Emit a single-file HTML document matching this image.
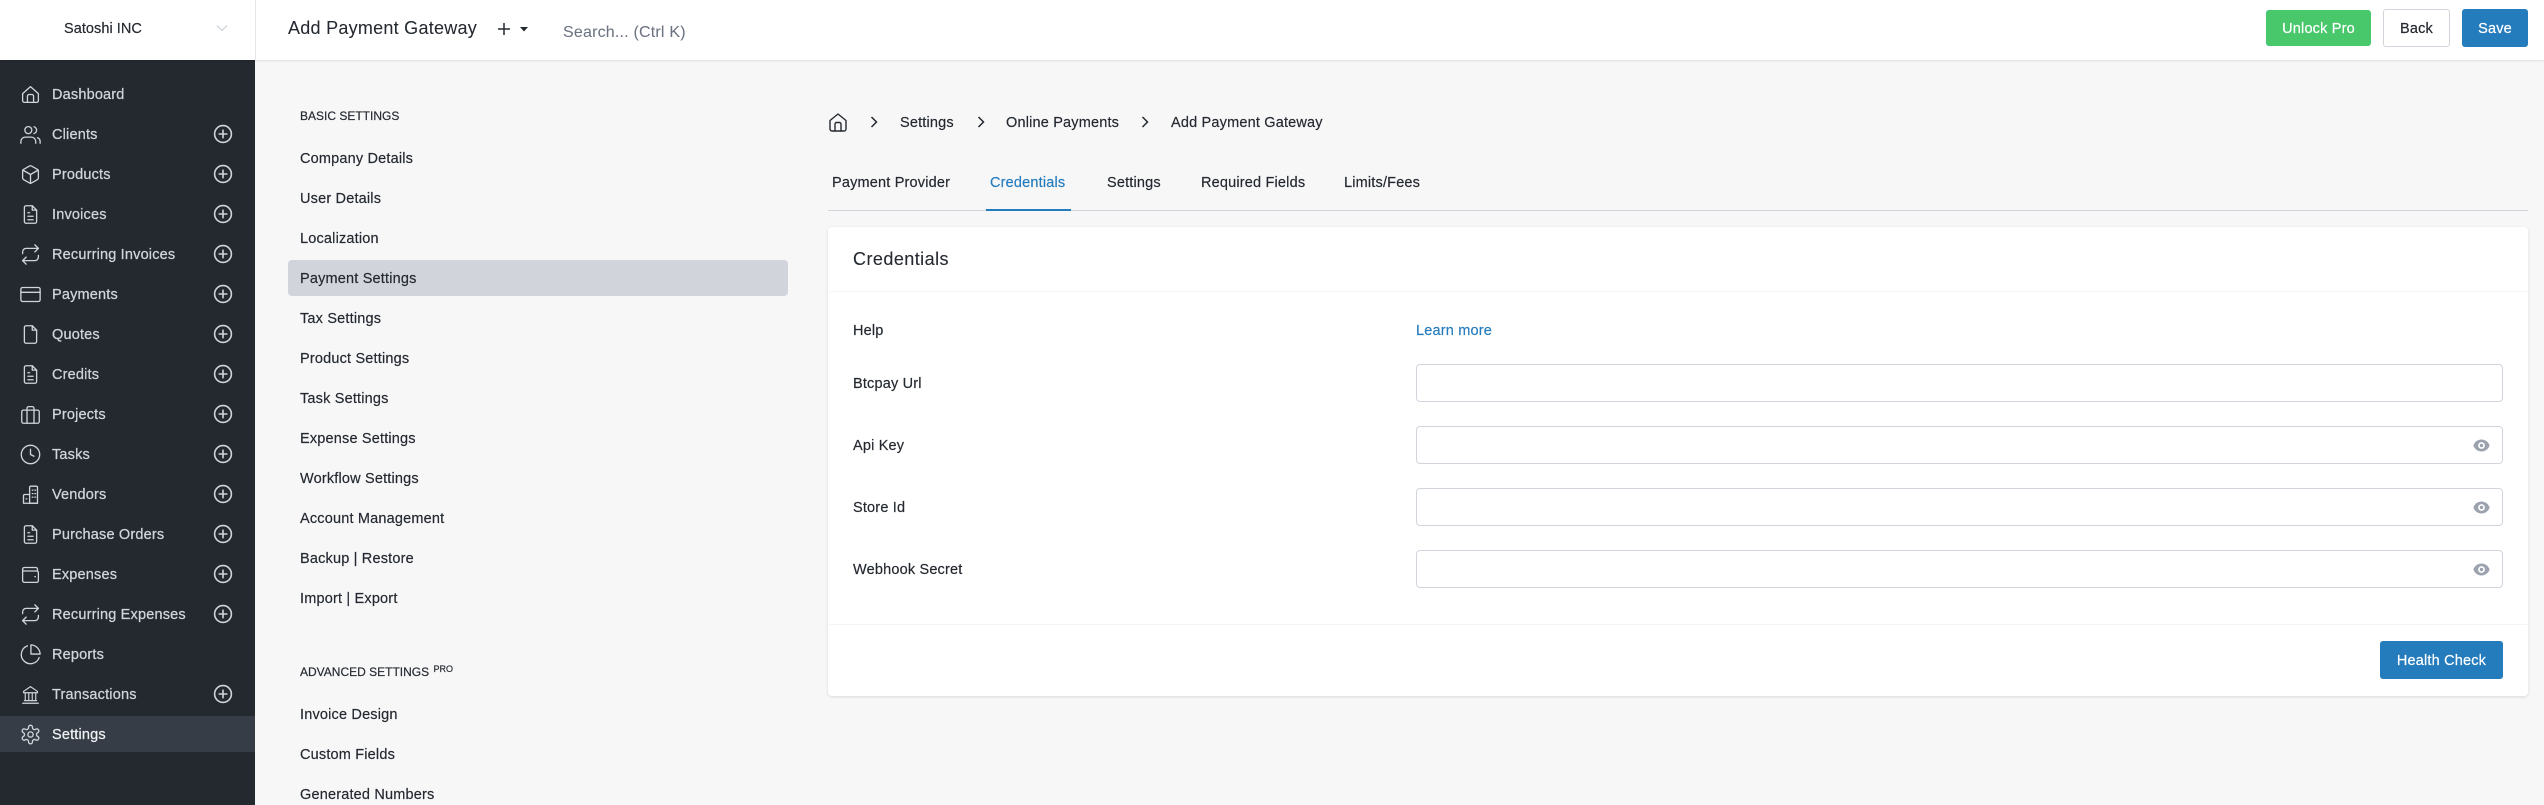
<!DOCTYPE html>
<html lang="en"><head><meta charset="utf-8"><title>Add Payment Gateway</title>
<style>
*{box-sizing:border-box}
html,body{margin:0;padding:0}
body{width:2544px;height:805px;overflow:hidden;position:relative;background:#f7f7f8;font-family:"Liberation Sans",sans-serif;font-size:14.5px;color:#242930;letter-spacing:.18px}
.t{position:absolute;white-space:nowrap;line-height:20px;height:20px;margin-top:1px;-webkit-text-stroke:.18px currentColor}
.m{-webkit-text-stroke:.25px currentColor}
.n{margin-top:0}
#top{position:absolute;left:0;top:0;width:2544px;height:60px;background:#fff;box-shadow:0 1px 2px rgba(0,0,0,.1)}
#co{position:absolute;left:0;top:0;width:256px;height:60px;border-right:1px solid #e5e7eb}
#side{position:absolute;left:0;top:60px;width:255px;height:745px;background:#242930}
#side .t{left:52px;color:#d1d5db}
.active{position:absolute;left:0;top:656px;width:255px;height:36px;background:#363d47}
svg{position:absolute;overflow:visible}
svg.i{left:19.5px;width:21px;height:21px;fill:none;stroke:#d1d5db;stroke-width:1.5;stroke-linecap:round;stroke-linejoin:round}
svg.p{left:213px;width:20px;height:20px;fill:none;stroke:#d1d5db;stroke-width:1.6;stroke-linecap:round}
.btn{position:absolute;border-radius:3px;color:#fff;text-align:center;padding-top:1px;-webkit-text-stroke:.2px currentColor}
.hl{position:absolute;left:288px;top:260px;width:500px;height:36px;background:#d1d5db;border-radius:4px}
.s .t{left:300px}
.card{position:absolute;left:828px;top:227px;width:1700px;height:469px;background:#fff;border-radius:4px;box-shadow:0 1px 3px rgba(0,0,0,.12)}
.hr{position:absolute;left:829px;width:1698px;height:1px;background:#f3f4f6}
.inp{position:absolute;left:1416px;width:1087px;height:38px;background:#fff;border:1px solid #d1d5db;border-radius:4px}
svg.e{left:2473px;width:17px;height:17px;fill:#9ca3af}
</style></head><body>

<div id="side">
<div class="active"></div>
<div class="t m" style="top:24px">Dashboard</div>
<div class="t m" style="top:64px">Clients</div>
<div class="t m" style="top:104px">Products</div>
<div class="t m" style="top:144px">Invoices</div>
<div class="t m" style="top:184px">Recurring Invoices</div>
<div class="t m" style="top:224px">Payments</div>
<div class="t m" style="top:264px">Quotes</div>
<div class="t m" style="top:304px">Credits</div>
<div class="t m" style="top:344px">Projects</div>
<div class="t m" style="top:384px">Tasks</div>
<div class="t m" style="top:424px">Vendors</div>
<div class="t m" style="top:464px">Purchase Orders</div>
<div class="t m" style="top:504px">Expenses</div>
<div class="t m" style="top:544px">Recurring Expenses</div>
<div class="t m" style="top:584px">Reports</div>
<div class="t m" style="top:624px">Transactions</div>
<div class="t m" style="top:664px;color:#eef0f2">Settings</div>

<svg class="i" style="top:23.5px" viewBox="0 0 24 24"><path d="M3 11 12 3l9 8v8a2 2 0 0 1-2 2H5a2 2 0 0 1-2-2Z"/><path d="M8.5 21v-7a2 2 0 0 1 2-2h3a2 2 0 0 1 2 2v7"/></svg>
<svg class="i" style="top:63.5px" viewBox="0 0 24 24"><circle cx="9.5" cy="7" r="4"/><path d="M1 22v-2a5 5 0 0 1 5-5h7a5 5 0 0 1 5 5v2"/><path d="M23 22v-2a4.5 4.5 0 0 0-3-4.3"/><path d="M16 3.2a4 4 0 0 1 0 7.7"/></svg>
<svg class="i" style="top:103.5px" viewBox="0 0 24 24"><path d="M21 8a2 2 0 0 0-1-1.73l-7-4a2 2 0 0 0-2 0l-7 4A2 2 0 0 0 3 8v8a2 2 0 0 0 1 1.73l7 4a2 2 0 0 0 2 0l7-4A2 2 0 0 0 21 16Z"/><path d="m3.3 7 8.7 5 8.7-5"/><path d="M12 22V12"/></svg>
<svg class="i" style="top:143.5px" viewBox="0 0 24 24"><path d="M14 2H7a2 2 0 0 0-2 2v16a2 2 0 0 0 2 2h10a2 2 0 0 0 2-2V7Z"/><path d="M14 2v5h5"/><path d="M9 10h2M9 14h6M9 18h6"/></svg>
<svg class="i" style="top:183.5px" viewBox="0 0 24 24"><path d="m17 1 4 4-4 4"/><path d="M3 11v-2a4 4 0 0 1 4-4h14"/><path d="m7 23-4-4 4-4"/><path d="M21 13v2a4 4 0 0 1-4 4H3"/></svg>
<svg class="i" style="top:223.5px" viewBox="0 0 24 24"><rect x="1" y="4" width="22" height="16" rx="2"/><path d="M1 9.5h22"/></svg>
<svg class="i" style="top:263.5px" viewBox="0 0 24 24"><path d="M14 2H7a2 2 0 0 0-2 2v16a2 2 0 0 0 2 2h10a2 2 0 0 0 2-2V7Z"/><path d="M14 2v5h5"/></svg>
<svg class="i" style="top:303.5px" viewBox="0 0 24 24"><path d="M14 2H7a2 2 0 0 0-2 2v16a2 2 0 0 0 2 2h10a2 2 0 0 0 2-2V7Z"/><path d="M14 2v5h5"/><path d="M9 10h2M9 14h6M9 18h6"/></svg>
<svg class="i" style="top:343.5px" viewBox="0 0 24 24"><rect x="2" y="7" width="20" height="15" rx="2"/><path d="M16 22V5a2 2 0 0 0-2-2h-4a2 2 0 0 0-2 2v17"/></svg>
<svg class="i" style="top:383.5px" viewBox="0 0 24 24"><circle cx="12" cy="12" r="10.5"/><path d="M12 6v6l4 2"/></svg>
<svg class="i" style="top:423.5px" viewBox="0 0 24 24"><path d="M11 22V4a1.5 1.5 0 0 1 1.5-1.5h6A1.5 1.5 0 0 1 20 4v18Z"/><path d="M11 12H5.500A1.500 1.500 0 0 0 4 13.500V22h16"/><path d="M14 7h.8M17 7h.8M14 11h.8M17 11h.8M14 15h.8M17 15h.8M7 17h.8"/></svg>
<svg class="i" style="top:463.5px" viewBox="0 0 24 24"><path d="M14 2H7a2 2 0 0 0-2 2v16a2 2 0 0 0 2 2h10a2 2 0 0 0 2-2V7Z"/><path d="M14 2v5h5"/><path d="M9 10h2M9 14h6M9 18h6"/></svg>
<svg class="i" style="top:503.5px" viewBox="0 0 24 24"><path d="M20 8V6a2 2 0 0 0-2-2H5a2 2 0 0 0-2 2v13a2 2 0 0 0 2 2h14a2 2 0 0 0 2-2v-9a2 2 0 0 0-2-2H3"/><path d="M17 14.500h.5"/></svg>
<svg class="i" style="top:543.5px" viewBox="0 0 24 24"><path d="m17 1 4 4-4 4"/><path d="M3 11v-2a4 4 0 0 1 4-4h14"/><path d="m7 23-4-4 4-4"/><path d="M21 13v2a4 4 0 0 1-4 4H3"/></svg>
<svg class="i" style="top:583.5px" viewBox="0 0 24 24"><path d="M21.900 15.500A10.500 10.500 0 1 1 8.500 2.100"/><path d="M23 11.500A11 11 0 0 0 12.500 1v10.500Z"/></svg>
<svg class="i" style="top:623.5px;stroke-width:1.3" viewBox="0 0 24 24"><path d="M3 22h18M5 19h14M6 19v-9M10 19v-9M14 19v-9M18 19v-9M4 10h16M4 10v-1.500L12 3l8 5.500V10"/></svg>
<svg class="i" style="top:663.5px" viewBox="0 0 24 24"><path d="M12.220 1.500h-.440a2 2 0 0 0-2 2v.680a2 2 0 0 1-1 1.730l-.430.250a2 2 0 0 1-2 0l-.650-.320a2 2 0 0 0-2.730.730l-.220.380a2 2 0 0 0 .730 2.730l.650.400a2 2 0 0 1 1 1.720v.510a2 2 0 0 1-1 1.740l-.650.390a2 2 0 0 0-.730 2.730l.220.380a2 2 0 0 0 2.730.730l.650-.320a2 2 0 0 1 2 0l.430.250a2 2 0 0 1 1 1.730v.680a2 2 0 0 0 2 2h.440a2 2 0 0 0 2-2v-.680a2 2 0 0 1 1-1.730l.430-.250a2 2 0 0 1 2 0l.650.320a2 2 0 0 0 2.730-.730l.220-.390a2 2 0 0 0-.730-2.730l-.650-.380a2 2 0 0 1-1-1.740v-.500a2 2 0 0 1 1-1.740l.650-.390a2 2 0 0 0 .730-2.730l-.220-.380a2 2 0 0 0-2.730-.730l-.650.320a2 2 0 0 1-2 0l-.430-.250a2 2 0 0 1-1-1.730V3.500a2 2 0 0 0-2-2Z"/><circle cx="12" cy="12" r="3"/></svg>

<svg class="p" style="top:64px" viewBox="0 0 20 20"><circle cx="10" cy="10" r="8.400"/><path d="M10 6.200v7.600M6.200 10h7.600"/></svg>
<svg class="p" style="top:104px" viewBox="0 0 20 20"><circle cx="10" cy="10" r="8.400"/><path d="M10 6.200v7.600M6.200 10h7.600"/></svg>
<svg class="p" style="top:144px" viewBox="0 0 20 20"><circle cx="10" cy="10" r="8.400"/><path d="M10 6.200v7.600M6.200 10h7.600"/></svg>
<svg class="p" style="top:184px" viewBox="0 0 20 20"><circle cx="10" cy="10" r="8.400"/><path d="M10 6.200v7.600M6.200 10h7.600"/></svg>
<svg class="p" style="top:224px" viewBox="0 0 20 20"><circle cx="10" cy="10" r="8.400"/><path d="M10 6.200v7.600M6.200 10h7.600"/></svg>
<svg class="p" style="top:264px" viewBox="0 0 20 20"><circle cx="10" cy="10" r="8.400"/><path d="M10 6.200v7.600M6.200 10h7.600"/></svg>
<svg class="p" style="top:304px" viewBox="0 0 20 20"><circle cx="10" cy="10" r="8.400"/><path d="M10 6.200v7.600M6.200 10h7.600"/></svg>
<svg class="p" style="top:344px" viewBox="0 0 20 20"><circle cx="10" cy="10" r="8.400"/><path d="M10 6.200v7.600M6.200 10h7.600"/></svg>
<svg class="p" style="top:384px" viewBox="0 0 20 20"><circle cx="10" cy="10" r="8.400"/><path d="M10 6.200v7.600M6.200 10h7.600"/></svg>
<svg class="p" style="top:424px" viewBox="0 0 20 20"><circle cx="10" cy="10" r="8.400"/><path d="M10 6.200v7.600M6.200 10h7.600"/></svg>
<svg class="p" style="top:464px" viewBox="0 0 20 20"><circle cx="10" cy="10" r="8.400"/><path d="M10 6.200v7.600M6.200 10h7.600"/></svg>
<svg class="p" style="top:504px" viewBox="0 0 20 20"><circle cx="10" cy="10" r="8.400"/><path d="M10 6.200v7.600M6.200 10h7.600"/></svg>
<svg class="p" style="top:544px" viewBox="0 0 20 20"><circle cx="10" cy="10" r="8.400"/><path d="M10 6.200v7.600M6.200 10h7.600"/></svg>
<svg class="p" style="top:624px" viewBox="0 0 20 20"><circle cx="10" cy="10" r="8.400"/><path d="M10 6.200v7.600M6.200 10h7.600"/></svg>
</div>

<div id="top">
<div id="co"></div>
<div class="t" style="left:64px;top:18px;letter-spacing:.05px">Satoshi INC</div>
<svg style="left:216px;top:24px;width:12px;height:8px;fill:none;stroke:#d1d5db;stroke-width:1.300" viewBox="0 0 12 8"><path d="M1 1.500 6 6.500l5-5"/></svg>
<div class="t n" style="left:288px;top:18px;font-size:18px;letter-spacing:.26px;-webkit-text-stroke:.05px currentColor">Add Payment Gateway</div>
<svg style="left:498px;top:23px;width:12px;height:12px;fill:none;stroke:#242930;stroke-width:1.500" viewBox="0 0 12 12"><path d="M6 0v12M0 6h12"/></svg>
<svg style="left:520px;top:27px;width:8px;height:5px;fill:#242930" viewBox="0 0 8 5"><path d="M0 0h8L4 4.500Z"/></svg>
<div class="t n" style="left:563px;top:23px;font-size:16px;letter-spacing:.2px;color:#6b7280;-webkit-text-stroke:.05px currentColor">Search... (Ctrl K)</div>
<div class="btn" style="left:2266px;top:10px;width:105px;height:36px;line-height:36px;background:#48c76b">Unlock Pro</div>
<div class="btn" style="left:2383px;top:9px;width:67px;height:38px;line-height:36px;background:#fff;border:1px solid #d1d5db;color:#242930">Back</div>
<div class="btn" style="left:2462px;top:9px;width:66px;height:38px;line-height:38px;background:#257cbd">Save</div>
</div>

<div class="hl"></div>
<div class="s">
<div class="t n" style="top:106px;font-size:12px;letter-spacing:0">BASIC SETTINGS</div>
<div class="t" style="top:148px">Company Details</div>
<div class="t" style="top:188px">User Details</div>
<div class="t" style="top:228px">Localization</div>
<div class="t" style="top:268px">Payment Settings</div>
<div class="t" style="top:308px">Tax Settings</div>
<div class="t" style="top:348px">Product Settings</div>
<div class="t" style="top:388px">Task Settings</div>
<div class="t" style="top:428px">Expense Settings</div>
<div class="t" style="top:468px">Workflow Settings</div>
<div class="t" style="top:508px">Account Management</div>
<div class="t" style="top:548px">Backup | Restore</div>
<div class="t" style="top:588px">Import | Export</div>
<div class="t n" style="top:662px;font-size:12px;letter-spacing:0">ADVANCED SETTINGS <span style="position:relative;top:-4px;font-size:9px;margin-left:1px">PRO</span></div>
<div class="t" style="top:704px">Invoice Design</div>
<div class="t" style="top:744px">Custom Fields</div>
<div class="t" style="top:784px">Generated Numbers</div>
</div>

<svg style="left:829px;top:113px;width:18px;height:19px;fill:none;stroke:#242930;stroke-width:1.400;stroke-linecap:round;stroke-linejoin:round" viewBox="0 0 18 19"><path d="M1 7.500 9 1l8 6.500V16a2 2 0 0 1-2 2H3a2 2 0 0 1-2-2Z"/><path d="M6 18v-7a1.500 1.500 0 0 1 1.500-1.500h3A1.500 1.500 0 0 1 12 11v7"/></svg>
<svg style="left:870px;top:116px;width:8px;height:12px;fill:none;stroke:#242930;stroke-width:1.500" viewBox="0 0 8 12"><path d="m1.500 1 5 5-5 5"/></svg>
<div class="t" style="left:900px;top:112px">Settings</div>
<svg style="left:977px;top:116px;width:8px;height:12px;fill:none;stroke:#242930;stroke-width:1.500" viewBox="0 0 8 12"><path d="m1.500 1 5 5-5 5"/></svg>
<div class="t" style="left:1006px;top:112px">Online Payments</div>
<svg style="left:1141px;top:116px;width:8px;height:12px;fill:none;stroke:#242930;stroke-width:1.500" viewBox="0 0 8 12"><path d="m1.500 1 5 5-5 5"/></svg>
<div class="t" style="left:1171px;top:112px">Add Payment Gateway</div>

<div class="t" style="left:832px;top:172px">Payment Provider</div>
<div class="t" style="left:990px;top:172px;color:#257cbd">Credentials</div>
<div class="t" style="left:1107px;top:172px">Settings</div>
<div class="t" style="left:1201px;top:172px">Required Fields</div>
<div class="t" style="left:1344px;top:172px">Limits/Fees</div>
<div style="position:absolute;left:828px;top:210px;width:1700px;height:1px;background:#d1d5db"></div>
<div style="position:absolute;left:986px;top:208.500px;width:85px;height:2px;background:#257cbd"></div>

<div class="card"></div>
<div class="t n" style="left:853px;top:249px;font-size:18px;letter-spacing:.45px;-webkit-text-stroke:.1px currentColor">Credentials</div>
<div class="hr" style="top:291px"></div>
<div class="t" style="left:853px;top:320px">Help</div>
<div class="t" style="left:1416px;top:320px;color:#257cbd">Learn more</div>
<div class="t" style="left:853px;top:373px">Btcpay Url</div>
<div class="t" style="left:853px;top:435px">Api Key</div>
<div class="t" style="left:853px;top:497px">Store Id</div>
<div class="t" style="left:853px;top:559px">Webhook Secret</div>
<div class="inp" style="top:364px"></div>
<div class="inp" style="top:426px"></div>
<div class="inp" style="top:488px"></div>
<div class="inp" style="top:550px"></div>
<svg class="e" style="top:437px" viewBox="0 0 20 20"><path d="M10 12a2 2 0 1 0 0-4 2 2 0 0 0 0 4z"/><path fill-rule="evenodd" d="M.458 10C1.732 5.943 5.522 3 10 3s8.268 2.943 9.542 7c-1.274 4.057-5.064 7-9.542 7S1.732 14.057.458 10zM14 10a4 4 0 1 1-8 0 4 4 0 0 1 8 0z"/></svg>
<svg class="e" style="top:499px" viewBox="0 0 20 20"><path d="M10 12a2 2 0 1 0 0-4 2 2 0 0 0 0 4z"/><path fill-rule="evenodd" d="M.458 10C1.732 5.943 5.522 3 10 3s8.268 2.943 9.542 7c-1.274 4.057-5.064 7-9.542 7S1.732 14.057.458 10zM14 10a4 4 0 1 1-8 0 4 4 0 0 1 8 0z"/></svg>
<svg class="e" style="top:561px" viewBox="0 0 20 20"><path d="M10 12a2 2 0 1 0 0-4 2 2 0 0 0 0 4z"/><path fill-rule="evenodd" d="M.458 10C1.732 5.943 5.522 3 10 3s8.268 2.943 9.542 7c-1.274 4.057-5.064 7-9.542 7S1.732 14.057.458 10zM14 10a4 4 0 1 1-8 0 4 4 0 0 1 8 0z"/></svg>
<div class="hr" style="top:624px"></div>
<div class="btn" style="left:2380px;top:641px;width:123px;height:38px;line-height:38px;background:#257cbd">Health Check</div>
</body></html>
